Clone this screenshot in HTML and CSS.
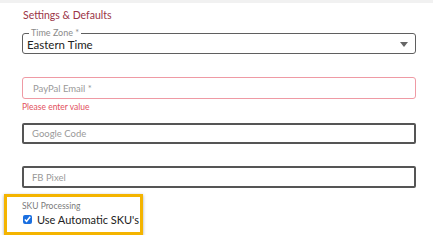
FILE: index.html
```html
<!DOCTYPE html>
<html>
<head>
  <title>Settings</title>
  <meta charset="utf-8">
  <link rel="stylesheet" href="styles.css">
</head>
<body>
  <div class="topbar"></div>
  <div class="container">
    <h3 class="section-title">Settings &amp; Defaults</h3>

    <div class="field select-field">
      <span class="legend">Time Zone *</span>
      <span class="value">Eastern Time</span>
      <span class="arrow"></span>
    </div>

    <div class="field error-field">
      <span class="placeholder">PayPal Email *</span>
    </div>
    <p class="error-text">Please enter value</p>

    <div class="field dark-field">
      <span class="placeholder">Google Code</span>
    </div>

    <div class="field dark-field fb">
      <span class="placeholder">FB Pixel</span>
    </div>

    <div class="sku-box">
      <div class="sku-label">SKU Processing</div>
      <label class="check-row">
        <input type="checkbox" checked>
        <span>Use Automatic SKU's</span>
      </label>
    </div>
  </div>
</body>
</html>
```

FILE: styles.css
```css
body {
  margin: 0;
  background: #fff;
  font-family: Lato, 'Open Sans', sans-serif;
}
.topbar {
  height: 3px;
  background: #f1f1f1;
}
.container {
  padding: 0 17px 0 22px;
}
.section-title {
  margin: 0;
  padding: 6px 0 0 1px;
  height: 24px;
  box-sizing: border-box;
  font-size: 10.5px;
  font-weight: normal;
  color: #9b3546;
}
.field {
  position: relative;
  display: flex;
  align-items: center;
  height: 21px;
  border-radius: 3px;
  box-sizing: border-box;
}
.select-field {
  margin-top: 6px;
  border: 1px solid #5f5f5f;
  padding-left: 4px;
}
.legend {
  position: absolute;
  left: 6px;
  top: -6px;
  padding: 0 2px;
  background: #fff;
  font-size: 9px;
  line-height: 10px;
  color: #8a8a8a;
}
.value {
  font-size: 11.5px;
  color: #222;
  padding-top: 2px;
}
.arrow {
  position: absolute;
  right: 7px;
  top: 8px;
  border-left: 4px solid transparent;
  border-right: 4px solid transparent;
  border-top: 5px solid #666;
}
.error-field {
  margin-top: 23px;
  border: 1px solid #ef9aa4;
  padding-left: 10px;
  height: 22px;
}
.placeholder {
  font-size: 9.5px;
  color: #999;
}
.error-text {
  margin: 3px 0 0;
  font-size: 8.5px;
  color: #e2505e;
}
.dark-field {
  margin-top: 11px;
  border: 2px solid #555;
  border-radius: 2px;
  padding-left: 8px;
}
.fb {
  margin-top: 22px;
  height: 22px;
}
.sku-box {
  margin: 6px 0 0 -18px;
  width: 139px;
  height: 41px;
  box-sizing: border-box;
  border: 3px solid #f4b400;
  box-shadow: 0 1px 3px rgba(0, 0, 0, 0.35);
  padding: 4px 0 0 15px;
}
.sku-label {
  font-size: 8.5px;
  color: #7a7a7a;
}
.check-row {
  display: flex;
  align-items: center;
  gap: 5px;
  margin-top: 2px;
  font-size: 11px;
  color: #222;
  white-space: nowrap;
}
.check-row input {
  margin: 0 0 0 1px;
  width: 9px;
  height: 9px;
  accent-color: #1a6fe0;
}
```
